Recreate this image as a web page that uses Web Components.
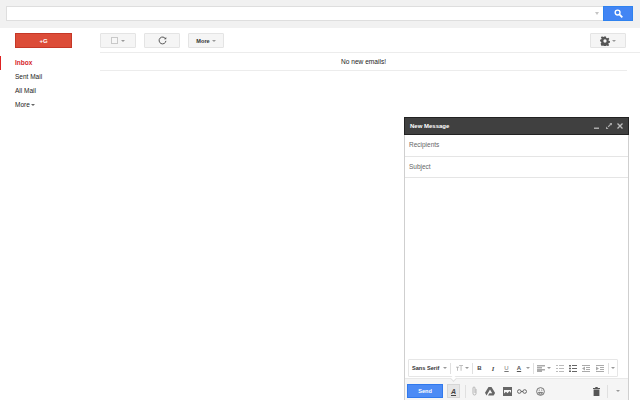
<!DOCTYPE html>
<html>
<head>
<meta charset="utf-8">
<style>
  html, body { margin: 0; height: 100%; overflow: hidden; background: #fff; font-family: "Liberation Sans", Arial, sans-serif; }
</style>
</head>
<body>
<mail-app></mail-app>

<template id="search-tpl">
  <style>
    :host { display: flex; height: 28px; box-sizing: border-box; padding: 6px 7px 7px 6px; background: #f1f1f1; }
    .input { flex: 1; border: 1px solid #dedede; border-right: none; background: #fff; display: flex; align-items: center; justify-content: flex-end; padding-right: 4px; }
    .input i { width: 0; height: 0; border: 2px solid transparent; border-top: 3px solid #c4c4c4; border-bottom: 0; }
    button { width: 30px; padding: 0; border: 1px solid #2f82ef; background: #4285f4; display: flex; align-items: center; justify-content: center; }
  </style>
  <div class="input"><i></i></div>
  <button>
    <svg width="9" height="9" viewBox="0 0 10 10" fill="none" stroke="#fff"><circle cx="4" cy="4" r="2.7" stroke-width="1.5"/><path d="M6 6l3.2 3.2" stroke-width="2"/></svg>
  </button>
</template>

<template id="side-tpl">
  <style>
    :host { display: block; width: 100px; flex: none; padding-top: 5px; box-sizing: border-box; }
    .compose { display: flex; align-items: center; justify-content: center; width: 57px; height: 15px; margin-left: 15px; box-sizing: border-box; border: 1px solid #c53727; background: #dc4c38; color: #fff; font: bold 6px "Liberation Sans", sans-serif; }
    nav { margin-top: 8px; font-size: 6.5px; color: #222; }
    a { display: block; height: 14px; line-height: 14px; padding-left: 15px; }
    a.on { color: #d6252a; font-weight: bold; box-shadow: inset 1px 0 0 #dd2222; }
    a i { display: inline-block; vertical-align: middle; margin-left: 1px; border: 2px solid transparent; border-top: 2px solid #666; border-bottom: 0; }
  </style>
  <div class="compose">+G</div>
  <nav>
    <a class="on">Inbox</a>
    <a>Sent Mail</a>
    <a>All Mail</a>
    <a>More<i></i></a>
  </nav>
</template>

<template id="btn-tpl">
  <style>
    :host { display: inline-flex; align-items: center; justify-content: center; gap: 2px; width: 36px; height: 15px; box-sizing: border-box; border: 1px solid #e4e4e4; border-radius: 1px; background: #f5f5f5; color: #333; font: bold 5.6px "Liberation Sans", sans-serif; }
    :host([caret])::after { content: ""; border: 2px solid transparent; border-top: 2px solid #999; border-bottom: 0; }
  </style>
  <slot></slot>
</template>

<template id="main-tpl">
  <style>
    :host { display: block; flex: 1; padding-top: 5px; }
    .bar { display: flex; gap: 8px; padding-right: 14px; height: 19px; border-bottom: 1px solid #ececec; }
    .sp { flex: 1; }
    .msg { height: 17px; line-height: 17px; margin-right: 13px; border-bottom: 1px solid #ececec; text-align: center; font-size: 6.6px; color: #222; }
    .box { width: 5px; height: 5px; margin-right: 1px; border: 1px solid #c9c9c9; background: #f7f7f7; }
  </style>
  <div class="bar">
    <tool-btn caret><span class="box"></span></tool-btn>
    <tool-btn>
      <svg width="9" height="9" viewBox="0 0 10 10" fill="none" stroke="#555" stroke-width="1.1"><path d="M8.400 3.200A3.800 3.800 0 1 0 8.800 5.400"/><path d="M6.600 3.600h2.600V1" fill="#555" stroke="none"/></svg>
    </tool-btn>
    <tool-btn caret>More</tool-btn>
    <span class="sp"></span>
    <tool-btn caret>
      <svg width="10" height="10" viewBox="0 0 11 11"><path fill="#555" fill-rule="evenodd" d="M4.400.6h2.200l.3 1.500 1.100.5 1.300-.8 1 1.400-1 1.100.2.9 1.400.4v1.800l-1.400.4-.3 1 .9 1.200-1.300 1.300-1.200-.9-1 .4-.4 1.500H4.500l-.4-1.500-1-.4-1.200.9L.6 8.500l.9-1.200-.4-1-1-.4V4.100l1.400-.4.3-1-.9-1.100 1.300-1.300 1.200.8 1-.4zM5.500 3.700a1.800 1.800 0 1 0 0 3.600 1.800 1.800 0 0 0 0-3.600z"/></svg>
    </tool-btn>
  </div>
  <div class="msg">No new emails!</div>
</template>

<template id="compose-tpl">
  <style>
    :host { position: absolute; left: 404px; top: 117px; width: 225px; height: 283px; box-sizing: border-box; border: 1px solid #cfcfcf; border-bottom: 0; border-top: 0; background: #fff; display: flex; flex-direction: column; font-size: 6.5px; color: #666; }
    header { height: 18px; flex: none; background: #404040; border: 1px solid #222; box-sizing: border-box; margin: 0 -1px; display: flex; align-items: center; padding: 0 5px; color: #fff; font-weight: bold; }
    header b { flex: 1; font-size: 6px; }
    header svg { display: block; }
    .field { height: 21px; flex: none; box-sizing: border-box; border-bottom: 1px solid #e5e5e5; line-height: 20px; padding-left: 4px; }
    .field.first { height: 22px; }
    .body { flex: 1; display: flex; flex-direction: column; justify-content: flex-end; padding: 0 10px 1px 3px; }
  </style>
  <header>
    <b>New Message</b>
    <svg style="margin-right:7px" width="5" height="5" viewBox="0 0 5 5"><path d="M0 3.500h5V5H0z" fill="#aaa"/></svg>
    <svg style="margin-right:5px" width="6" height="6" viewBox="0 0 7 7" fill="#aaa"><path d="M4 0h3v3zM0 4v3h3zM2 4l3-3 1 1-3 3z"/></svg>
    <svg width="6" height="6" viewBox="0 0 6 6" stroke="#bbb" stroke-width="1.300"><path d="M.5.5l5 5M5.500.5l-5 5"/></svg>
  </header>
  <div class="field first">Recipients</div>
  <div class="field">Subject</div>
  <div class="body"><format-bar></format-bar></div>
  <send-bar></send-bar>
</template>

<template id="format-tpl">
  <style>
    :host { display: flex; align-items: center; height: 18px; box-sizing: border-box; border: 1px solid #e6e6e6; border-radius: 1px; padding-left: 3px; color: #444; font: 6px "Liberation Sans", sans-serif; }
    .car { flex: none; border: 2px solid transparent; border-top: 2px solid #999; border-bottom: 0; }
    .sep { flex: none; width: 1px; height: 11px; background: #e0e0e0; }
    .i { display: flex; align-items: center; justify-content: center; flex: none; }
    .f { font-weight: bold; color: #333; width: 30px; font-size: 5.6px; white-space: nowrap; }
    svg { display: block; flex: none; }
  </style>
  <span class="f">Sans Serif</span><i class="car" style="margin-left:1px"></i>
  <span class="sep" style="margin-left:3px"></span>
  <svg style="margin-left:5px" width="7" height="6" viewBox="0 0 9 7" fill="#aaa"><path d="M0 2h4v1H2.500v4h-1V3H0zM4 0h5v1H7v6H6V1H4z"/></svg><i class="car" style="margin-left:2px"></i>
  <span class="sep" style="margin-left:3px"></span>
  <b class="i" style="width:13px">B</b>
  <i class="i" style="width:14px;font:italic bold 6.500px 'Liberation Serif',serif">I</i>
  <u class="i" style="width:13px;color:#777">U</u>
  <u class="i" style="width:12px;font-weight:bold;color:#555">A</u><i class="car" style="margin-left:1px"></i>
  <span class="sep" style="margin-left:3px"></span>
  <svg style="margin-left:3px" width="8" height="7" viewBox="0 0 8 7" fill="#aaa"><path d="M0 0h8v1.500H0zM0 2h5v1.500H0zM0 4h8v1.500H0zM0 5.500h5V7H0z"/></svg><i class="car" style="margin-left:2px"></i>
  <svg style="margin-left:5px" width="8" height="7" viewBox="0 0 8 7" fill="#bbb"><path d="M3 0h5v1H3zM3 3h5v1H3zM3 6h5v1H3zM0 0h2v1H0zM0 3h2v1H0zM0 6h2v1H0z"/></svg>
  <svg style="margin-left:5px" width="8" height="7" viewBox="0 0 8 7" fill="#666"><path d="M3 0h5v1H3zM3 3h5v1H3zM3 6h5v1H3zM0 0h2v1.500H0zM0 2.800h2v1.500H0zM0 5.500h2V7H0z"/></svg>
  <svg style="margin-left:5px" width="8" height="7" viewBox="0 0 8 7" fill="#aaa"><path d="M0 0h8v1H0zM4 2h4v1H4zM4 4h4v1H4zM0 6h8v1H0zM3 1.500v4L0 3.500z"/></svg>
  <svg style="margin-left:6px" width="8" height="7" viewBox="0 0 8 7" fill="#aaa"><path d="M0 0h8v1H0zM4 2h4v1H4zM4 4h4v1H4zM0 6h8v1H0zM0 1.500v4l3-2z"/></svg>
  <span class="sep" style="margin-left:4px"></span><i class="car" style="margin-left:2px"></i>
</template>

<template id="send-tpl">
  <style>
    :host { display: flex; align-items: center; flex: none; height: 22px; padding: 3px 8px 0 2px; box-sizing: border-box; background: #f5f5f5; border-top: 1px solid #e8e8e8; position: relative; }
    :host::before { content: ""; position: absolute; left: 46px; top: -3px; width: 4px; height: 4px; background: #fff; border: 1px solid #e0e0e0; border-top: 0; border-left: 0; transform: rotate(45deg); }
    .send { width: 36px; height: 14px; display: flex; align-items: center; justify-content: center; box-sizing: border-box; border: 1px solid #3079ed; background: #4c8bf5; color: #fff; font: bold 5.6px "Liberation Sans", sans-serif; }
    .a { width: 13px; height: 14px; margin-left: 4px; display: flex; align-items: center; justify-content: center; box-sizing: border-box; border: 1px solid #d6d6d6; background: #e6e6e6; font: italic bold 7px "Liberation Sans", sans-serif; color: #444; text-decoration: underline; }
    .sep { flex: none; width: 1px; height: 13px; background: #e0e0e0; }
    .sp { flex: 1; }
    .car { flex: none; border: 2px solid transparent; border-top: 2px solid #999; border-bottom: 0; }
    svg { display: block; flex: none; }
  </style>
  <div class="send">Send</div>
  <div class="a">A</div>
  <span class="sep" style="margin-left:5px"></span>
  <svg style="margin-left:6px" width="5" height="10" viewBox="0 0 5 10" fill="none" stroke="#b5b5b5"><path d="M4 3v4.500a1.500 1.500 0 0 1-3 0V2a1 1 0 0 1 2 0v5"/></svg>
  <svg style="margin-left:8px" width="10" height="9" viewBox="0 0 10 9" fill="#666"><path d="M3.500 0h3L10 5.800 8.500 8.500 5 2.500 1.500 8.500 0 5.800zM3 8.500l1.400-2.300H10L8.600 8.500z"/></svg>
  <svg style="margin-left:8px" width="9" height="9" viewBox="0 0 9 9" fill="#666" fill-rule="evenodd"><path d="M0 0h9v9H0zM1 3v3.500l2-1.800 1.500 1.500L6.500 4 8 6V3z"/></svg>
  <svg style="margin-left:5px" width="10" height="5" viewBox="0 0 10 5" fill="none" stroke="#666"><circle cx="2.300" cy="2.500" r="1.800"/><circle cx="7.700" cy="2.500" r="1.800"/><path d="M4 2.500h2"/></svg>
  <svg style="margin-left:9px" width="9" height="9" viewBox="0 0 10 10" fill="none" stroke="#666"><circle cx="5" cy="5" r="4.300"/><path d="M2.800 6h4.400a2.200 2 0 0 1-4.400 0zM3 3.500h1.200M5.800 3.500H7"/></svg>
  <span class="sp"></span>
  <svg style="margin-right:7px" width="7" height="9" viewBox="0 0 7 9" fill="#555"><path d="M0 1h2.300V0h2.400v1H7v1H0zM.6 2.500h5.800V9H.6z"/></svg>
  <span class="sep" style="margin-right:8px"></span>
  <i class="car"></i>
</template>

<template id="app-tpl">
  <style>
    :host { display: block; position: relative; width: 640px; height: 400px; overflow: hidden; }
    .row { display: flex; }
  </style>
  <search-bar></search-bar>
  <div class="row">
    <side-nav></side-nav>
    <mail-list></mail-list>
  </div>
  <compose-window></compose-window>
</template>

<script>
  // each tag just clones its own template into an open shadow root
  const tags = {
    'search-bar': 'search-tpl',
    'side-nav': 'side-tpl',
    'tool-btn': 'btn-tpl',
    'mail-list': 'main-tpl',
    'format-bar': 'format-tpl',
    'send-bar': 'send-tpl',
    'compose-window': 'compose-tpl',
    'mail-app': 'app-tpl'
  }
  Object.keys(tags).forEach(tag => {
    customElements.define(tag, class extends HTMLElement {
      constructor() {
        super()
        const content = document.getElementById(tags[tag]).content
        this.attachShadow({ mode: 'open' }).appendChild(content.cloneNode(true))
      }
    })
  })
</script>
</body>
</html>
